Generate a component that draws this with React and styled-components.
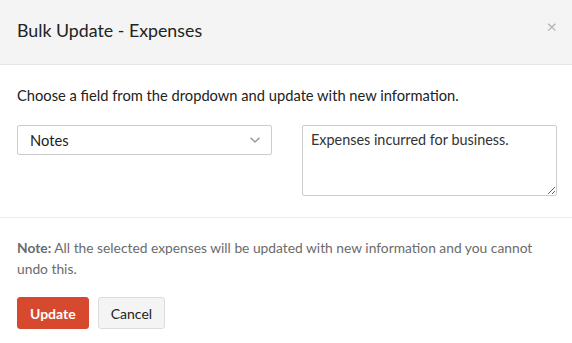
import React from "react";
import styled, { createGlobalStyle } from "styled-components";

const Global = createGlobalStyle`
  html, body { margin: 0; padding: 0; background: #fff; }
  body { font-family: Lato, "Open Sans", sans-serif; color: #222; }
  * { box-sizing: border-box; }
`;

const Modal = styled.div`
  width: 572px;
  height: 343px;
  background: #fff;
  display: flex;
  flex-direction: column;
`;

const Header = styled.div`
  height: 65px;
  background: #f4f4f4;
  border-bottom: 1px solid #e6e6e6;
  display: flex;
  align-items: center;
  justify-content: space-between;
  padding: 0 15px 4px 17px;
`;

const Title = styled.h1`
  margin: 0;
  font-size: 17.8px;
  font-weight: 400;
  color: #222;
`;

const Close = styled.button`
  border: 0;
  background: none;
  padding: 0;
  color: #b5b5b5;
  font-size: 18px;
  line-height: 1;
  font-family: Lato, sans-serif;
  margin-top: -8px;
`;

const Body = styled.div`
  padding: 20px 17px 21px;
  border-bottom: 1px solid #ebebeb;
`;

const Intro = styled.p`
  margin: 0 0 20px;
  font-size: 14.7px;
  line-height: 20px;
  color: #222;
`;

const FieldRow = styled.div`
  display: grid;
  grid-template-columns: 255px 255px;
  column-gap: 30px;
  align-items: start;
`;

const Select = styled.div`
  height: 30px;
  border: 1px solid #ccc;
  border-radius: 2px;
  display: flex;
  align-items: center;
  justify-content: space-between;
  padding: 0 10px 0 12px;
  font-size: 14.7px;
  color: #222;
`;

const TextArea = styled.textarea`
  width: 255px;
  height: 71px;
  border: 1px solid #ccc;
  border-radius: 2px;
  padding: 5px 8px;
  font-family: Lato, "Open Sans", sans-serif;
  font-size: 14.4px;
  color: #333;
  resize: both;
  outline: none;
`;

const Footer = styled.div`
  padding: 19px 17px 0;
`;

const Note = styled.p`
  margin: 0 0 18px;
  font-size: 13.8px;
  line-height: 21px;
  color: #6b6b6b;
  b { font-weight: 700; color: #6b6b6b; }
`;

const Actions = styled.div`
  display: flex;
  gap: 9px;
`;

const Button = styled.button`
  height: 32px;
  padding: 0 12px;
  border-radius: 3px;
  font-family: Lato, "Open Sans", sans-serif;
  font-size: 14px;
  border: 1px solid ${(p) => (p.$primary ? "#d4482f" : "#dcdcdc")};
  background: ${(p) => (p.$primary ? "#d6492f" : "#f4f4f4")};
  color: ${(p) => (p.$primary ? "#fff" : "#222")};
  font-weight: ${(p) => (p.$primary ? 700 : 400)};
`;

const Chevron = () => (
  <svg width="12" height="8" viewBox="0 0 12 8">
    <path d="M1.5 1.8 L6 6 L10.5 1.8" fill="none" stroke="#999" strokeWidth="1.5" />
  </svg>
);

export default function App() {
  return (
    <>
      <Global />
      <Modal>
        <Header>
          <Title>Bulk Update - Expenses</Title>
          <Close aria-label="close">×</Close>
        </Header>
        <Body>
          <Intro>Choose a field from the dropdown and update with new information.</Intro>
          <FieldRow>
            <Select>
              <span>Notes</span>
              <Chevron />
            </Select>
            <TextArea defaultValue="Expenses incurred for business." />
          </FieldRow>
        </Body>
        <Footer>
          <Note>
            <b>Note:</b> All the selected expenses will be updated with new information and you cannot undo this.
          </Note>
          <Actions>
            <Button $primary>Update</Button>
            <Button>Cancel</Button>
          </Actions>
        </Footer>
      </Modal>
    </>
  );
}
